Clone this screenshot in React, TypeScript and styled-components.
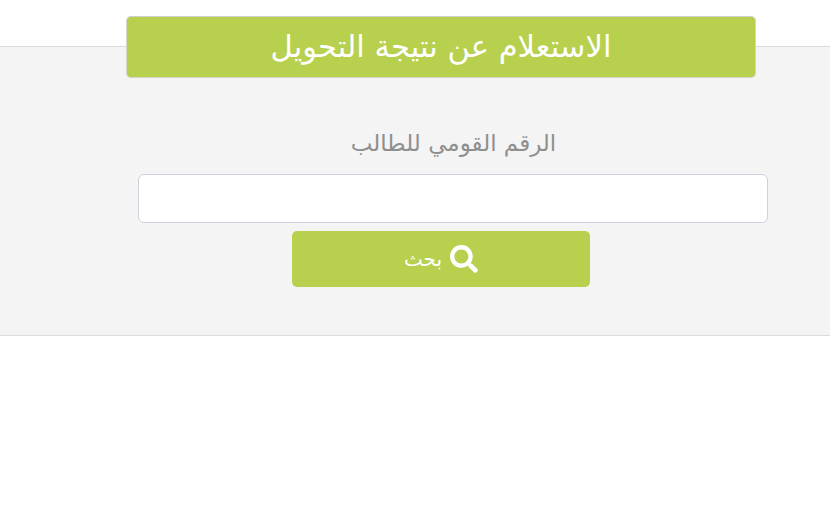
import React from "react";
import styled, { createGlobalStyle } from "styled-components";
import { FaSearch } from "react-icons/fa";

const Global = createGlobalStyle`
  html, body { margin: 0; padding: 0; background: #fff; }
  body { font-family: "DejaVu Sans", sans-serif; }
`;

const Page = styled.div`
  padding-top: 46px;
  min-height: 460px;
  background: #fff;
`;

const Panel = styled.section`
  height: 290px;
  box-sizing: border-box;
  background: #f4f4f4;
  border-top: 1px solid #dcdcdc;
  border-bottom: 1px solid #dcdcdc;
  display: flex;
  flex-direction: column;
  align-items: flex-start;
`;

const Title = styled.h1`
  box-sizing: border-box;
  width: 630px;
  height: 62px;
  margin: -31px 0 0 126px;
  background: #b7d04e;
  border: 1px solid #d3d8c8;
  border-top-color: #cfcfcf;
  border-radius: 5px;
  color: #fff;
  font-size: 30.6px;
  font-weight: 400;
  line-height: 59px;
  text-align: center;
`;

const Form = styled.form`
  width: 630px;
  margin: 49px 0 0 138px;
  display: flex;
  flex-direction: column;
  align-items: center;
`;

const Label = styled.label`
  width: 630px;
  color: #8f8f8f;
  font-size: 23px;
  line-height: 32px;
  text-align: center;
  box-sizing: border-box;
  padding-left: 1px;
`;

const Input = styled.input`
  box-sizing: border-box;
  width: 630px;
  height: 49px;
  margin-top: 15px;
  background: #fff;
  border: 1px solid #cdd3dc;
  border-radius: 6px;
  padding: 0 12px;
`;

const Button = styled.button`
  box-sizing: border-box;
  width: 298px;
  height: 56px;
  margin: 8px 0 0 154px;
  align-self: flex-start;
  background: #b7d04e;
  border: 0;
  border-radius: 5px;
  color: #fff;
  font-family: inherit;
  font-size: 20px;
  display: flex;
  align-items: center;
  justify-content: center;
  gap: 8px;
  padding: 0;
  direction: rtl;
`;

export default function App() {
  return (
    <Page>
      <Global />
      <Panel>
        <Title dir="rtl">الاستعلام عن نتيجة التحويل</Title>
        <Form>
          <Label dir="rtl" htmlFor="nid">الرقم القومي للطالب</Label>
          <Input id="nid" type="text" />
          <Button type="button">
            <FaSearch size={28} />
            <span>بحث</span>
          </Button>
        </Form>
      </Panel>
    </Page>
  );
}
